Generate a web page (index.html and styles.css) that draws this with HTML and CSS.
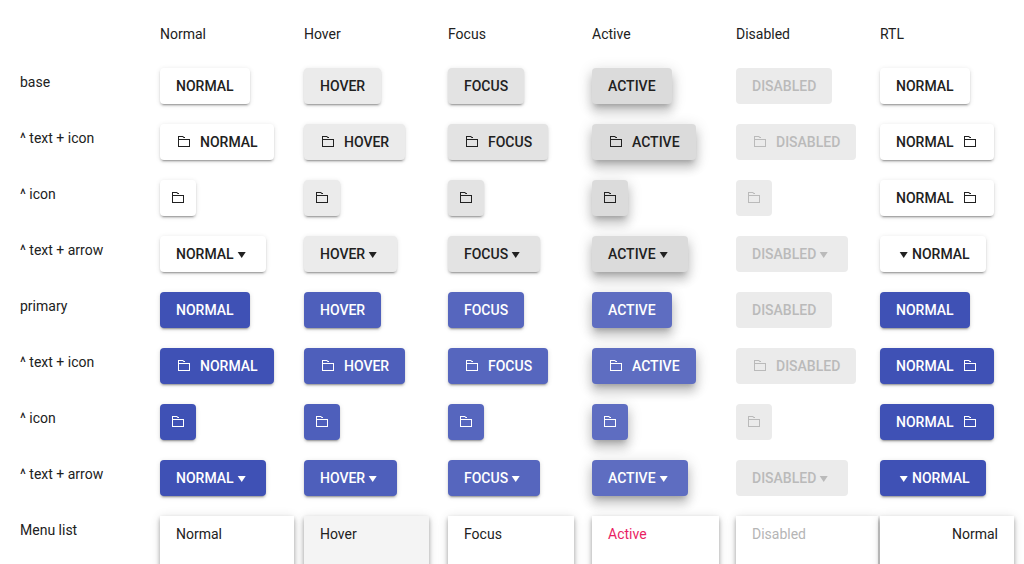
FILE: index.html
```
<!DOCTYPE html>
<html lang="en">
<head>
<meta charset="utf-8">
<meta name="viewport" content="width=device-width, initial-scale=1">
<title>Buttons</title>
<link rel="stylesheet" href="styles.css">
</head>
<body>
<table class="states">
  <thead>
    <tr class="states-head"><td class="corner"></td><th scope="col">Normal</th><th scope="col">Hover</th><th scope="col">Focus</th><th scope="col">Active</th><th scope="col">Disabled</th><th scope="col">RTL</th></tr>
  </thead>
  <tbody id="rows"></tbody>
</table>
<script src="rows.js"></script>
</body>
</html>
```
FILE: rows.js
```
const states = ["normal", "hover", "focus", "active", "disabled", "normal"];
const folder = '<svg class="icon" viewBox="0 0 16 16" aria-hidden="true"><path d="M2 2h5l1 1h1v1H7.6l-1-1H3v2h11v8H2zM3 6v6h10V6z" fill-rule="evenodd"/></svg>';
const arrow = '<svg class="icon" viewBox="0 0 16 16" aria-hidden="true"><path d="M3.7 6h8l-4 6z"/></svg>';
const kinds = [
  { label: "base", kind: "text" },
  { label: "^ text + icon", kind: "icon-text" },
  { label: "^ icon", kind: "icon" },
  { label: "^ text + arrow", kind: "arrow" }
];

function direction(rtl) {
  return rtl ? ' dir="rtl"' : "";
}

function button(kind, primary, state, rtl) {
  const name = state[0].toUpperCase() + state.slice(1);
  const shape = kind === "icon" && rtl ? "icon-text" : kind;
  const text = `<span>${name}</span>`;
  const body = {
    "text": text,
    "icon-text": folder + text,
    "icon": folder,
    "arrow": text + arrow
  }[shape];
  const aria = shape === "icon" ? ` aria-label="${name}"` : "";
  return `<button type="button" class="btn ${primary ? "btn-primary " : ""}btn-${shape} is-${state}"${direction(rtl)}${aria}${state === "disabled" ? " disabled" : ""}>${body}</button>`;
}

function row(label, render) {
  const cells = states.map((s, i) => `<td>${render(s, i === 5)}</td>`).join("");
  return `<tr><th scope="row">${label}</th>${cells}</tr>`;
}

let html = "";
for (const primary of [false, true]) {
  for (const k of kinds) {
    const label = primary && k.kind === "text" ? "primary" : k.label;
    html += row(label, (s, rtl) => button(k.kind, primary, s, rtl));
  }
}
html += row("Menu list", (s, rtl) => `<div class="menu"${direction(rtl)}><button type="button" class="menu-item is-${s}"${s === "disabled" ? " disabled" : ""}>${s[0].toUpperCase() + s.slice(1)}</button></div>`);
document.getElementById("rows").innerHTML = html;
```
FILE: styles.css
```
body {
  margin: 0;
  padding: 24px 0 0 20px;
  background: #fff;
  color: #212121;
  font: 14px/20px Roboto, sans-serif;
}

.states {
  width: 100%;
  min-width: 1004px;
  table-layout: fixed;
  border-collapse: collapse;
}

.states th {
  padding: 0;
  font-weight: 400;
  text-align: left;
  vertical-align: top;
}

.states td {
  padding: 0;
  vertical-align: top;
}

.states .corner {
  width: 140px;
}

.states-head {
  height: 44px;
}

.states tbody tr {
  height: 56px;
}

.states tbody th {
  padding-top: 4px;
}

.btn {
  display: inline-flex;
  align-items: center;
  height: 36px;
  padding: 0 16px;
  border: 0;
  border-radius: 4px;
  background: #fff;
  color: inherit;
  font: inherit;
  font-weight: 500;
  text-transform: uppercase;
  vertical-align: top;
  box-shadow: 0 3px 1px -2px rgba(0, 0, 0, .2), 0 2px 2px rgba(0, 0, 0, .14), 0 1px 5px rgba(0, 0, 0, .12);
}

.btn-icon-text {
  gap: 8px;
}

.btn-icon {
  padding: 0 10px;
}

.icon {
  flex: none;
  width: 16px;
  height: 16px;
  fill: currentColor;
}

.btn.is-hover { background: #ebebeb; }
.btn.is-focus { background: #e3e3e3; }
.btn.is-active { background: #dbdbdb; }

.btn-primary { background: #3f51b5; color: #fff; }
.btn-primary.is-hover { background: #4e5fbb; }
.btn-primary.is-focus { background: #5666be; }
.btn-primary.is-active { background: #5e6dc1; }

.btn.is-active {
  box-shadow: 0 5px 5px -3px rgba(0, 0, 0, .2), 0 8px 10px 1px rgba(0, 0, 0, .14), 0 3px 14px 2px rgba(0, 0, 0, .12);
}

.btn.is-disabled {
  background: #ebebeb;
  color: #bababa;
  box-shadow: none;
}

.menu {
  display: inline-block;
  background: #fff;
  vertical-align: top;
  box-shadow: 0 2px 4px rgba(0, 0, 0, .2), 0 4px 5px rgba(0, 0, 0, .14), 0 1px 10px rgba(0, 0, 0, .12);
}

.menu-item {
  display: block;
  min-height: 64px;
  padding: 8px 16px 36px;
  padding-inline-end: 72px;
  border: 0;
  background: transparent;
  color: inherit;
  font: inherit;
  text-align: start;
}

.menu-item.is-hover { background: #f4f4f4; }
.menu-item.is-active { color: #e91e63; }
.menu-item.is-disabled { color: #b5b5b5; }
```
